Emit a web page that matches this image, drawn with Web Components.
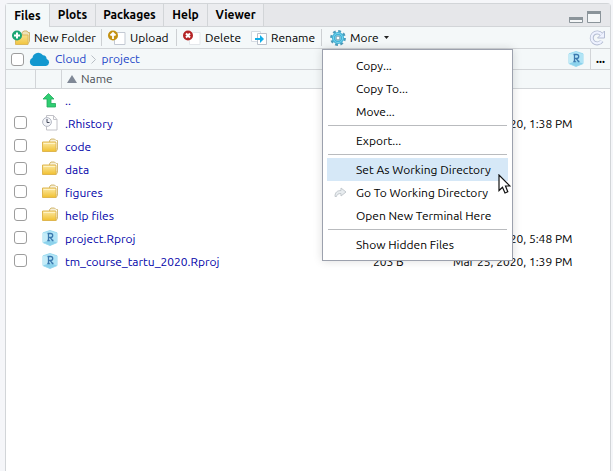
<!DOCTYPE html>
<html lang="en">
<head>
<meta charset="utf-8">
<title>Files</title>
<style>
html, body { height: 100%; }
body { margin: 0; background: #f5f6f9; color: #000; font: 12px/16px Ubuntu, "Noto Sans", "Open Sans", sans-serif; }
</style>
</head>
<body>
<files-pane></files-pane>
<script>
const RPROJ = `<svg width="16" height="16" viewBox="0 0 16 16"><path d="M8 .5 15 2.800v9.800L8 15.500 1 12.600V2.800z" fill="#b4e6f7" stroke="#9bdaef"/><path d="M1 2.800 8 5v10.500L1 12.600z" fill="#c4ecf8"/><path d="M8 5l7-2.200v9.800L8 15.500z" fill="#b0e4f6"/><path d="M1 12.600 8 10l7 2.600L8 15.500z" fill="#8cd2ec"/><path d="M5.500 3.500h3.200q2 0 2 2t-2 2H7M6.500 3.500v7M5.300 10.500h2.500M8.300 7.500l2.200 3h1" fill="none" stroke="#3a78ae" stroke-width="1.300"/></svg>`;
const FOLDER = `<svg width="16" height="16" viewBox="0 0 16 16"><defs><linearGradient id="g" x2="0" y2="1"><stop stop-color="#fbe9a6"/><stop offset="1" stop-color="#f1c02f"/></linearGradient></defs><path d="M7.500 4V2.500L9 1h3.500L14 2.500h1.500v9L14 13.500z" fill="#efe2b8" stroke="#d4bb78"/><path d="M9 4V3h5.500v7" fill="none" stroke="#fff"/><path d="M.5 4h13.200l.3 1v8.500H.5z" fill="url(#g)" stroke="#dfb64f"/><path d="M1.500 5.500h11.800" stroke="#fff3c4"/></svg>`;
const ICONS = {
  rproj: RPROJ,
  folder: FOLDER,
  newfolder: `<svg width="18" height="16" viewBox="0 0 18 16"><defs><linearGradient id="n" x2="0" y2="1"><stop stop-color="#f7e08f"/><stop offset="1" stop-color="#f2c53d"/></linearGradient></defs><path d="M10 4V2.500L12 1h3l1 1.500h1.500v9l-1.500 2z" fill="#efe2b8" stroke="#d0b56c"/><path d="M3.500 5H16v9.500H3.500z" fill="url(#n)" stroke="#dcb95c"/><circle cx="5" cy="5.500" r="5" fill="#18a573"/><path d="M5 2.500v6M2 5.500h6" stroke="#fff" stroke-width="2"/></svg>`,
  upload: `<svg width="18" height="16" viewBox="0 0 18 16"><path d="M6.500 2.500H17v12H6.500z" fill="#fff" stroke="#c3c9d3"/><circle cx="5" cy="5.500" r="5" fill="#c39111"/><path d="M5 9V4M2.500 5.500 5 3l2.500 2.500" fill="none" stroke="#fff" stroke-width="1.800"/></svg>`,
  remove: `<svg width="18" height="16" viewBox="0 0 18 16"><path d="M6.500 2.500H17v12H6.500z" fill="#fff" stroke="#e3e6ea"/><circle cx="5" cy="5.500" r="5" fill="#b42426"/><path d="M3 3.500l4 4M7 3.500l-4 4" stroke="#fff" stroke-width="2"/></svg>`,
  rename: `<svg width="16" height="16" viewBox="0 0 16 16"><path d="M.5 1.500h9v10h-9z" fill="#fff" stroke="#d5dbe3"/><path d="M6.500 3.500h9v11h-9z" fill="#fff" stroke="#b9c0cb"/><path d="M4 8h5V5l4 4-4 4v-3H4z" fill="#12aee8"/></svg>`,
  gear: `<svg width="16" height="16" viewBox="0 0 16 16"><circle cx="8" cy="8" r="6.700" fill="none" stroke="#4d9bba" stroke-width="2.400" stroke-dasharray="2.800 2.462"/><circle cx="8" cy="8" r="4.400" fill="#b7e2ef" stroke="#3fb4da" stroke-width="3.400"/><circle cx="8" cy="8" r="4.600" fill="none" stroke="#7dd3eb"/><circle cx="8" cy="8" r="2" fill="#fff" stroke="#6c9db0"/></svg>`,
  refresh: `<svg width="16" height="16" viewBox="0 0 16 16"><path d="M12.500 4.500A5.500 5.500 0 1 0 12.800 11" fill="none" stroke="#b4bcd2" stroke-width="4"/><path d="M15.500 1v7h-7z" fill="#eef2ff" stroke="#b4bcd2"/><path d="M12.500 4.500A5.500 5.500 0 1 0 12.600 11" fill="none" stroke="#eef2ff" stroke-width="2.200"/></svg>`,
  cloud: `<svg width="21" height="14" viewBox="0 0 21 14"><path d="M4.500 14a4.300 4.300 0 0 1-1-8.200A5.800 5.800 0 0 1 14 3.200a4 4 0 0 1 3.700 3.700A3.700 3.700 0 0 1 17 14z" fill="#1398cf"/></svg>`,
  up: `<svg width="16" height="16" viewBox="0 0 16 16"><path d="M6.500 1.500 12 7H9v4.500h4.500v3.500H5V7H1z" fill="#2fce72" stroke="#22a85c" stroke-width=".8"/></svg>`,
  history: `<svg width="16" height="16" viewBox="0 0 16 16"><path d="M4.500.5h7l3.500 4v10.500H4.500z" fill="#fff" stroke="#c2c2c8"/><path d="M11.500.5v4H15" fill="none" stroke="#c2c2c8"/><circle cx="5" cy="7" r="4.400" fill="#f3f4f8" stroke="#b5b9c4"/><path d="M5 4v3.500h2.500" fill="none" stroke="#444b5c"/></svg>`,
  goto: `<svg width="13" height="11" viewBox="0 0 13 11"><path d="M1 9.500C1 5.500 3 3.500 7 3.500V1l5 4-5 4V6.500C4 6.500 3 7.500 2.500 9.500z" fill="#e8ecef" stroke="#c3c9ce"/></svg>`,
  cursor: `<svg width="13" height="20" viewBox="0 0 13 20"><path d="M1 1v15.500l3.500-3.300L7 19l2.800-1.300L7.500 12H12z" fill="#fff" stroke="#111" stroke-width="1.200"/></svg>`,
  minimize: `<svg width="14" height="6" viewBox="0 0 14 6"><path d="M.5.5h13v5H.5z" fill="#f5f7f8" stroke="#8b949a"/><path d="M0 0h14v3H0z" fill="#8b949a"/></svg>`,
  maximize: `<svg width="14" height="12" viewBox="0 0 14 12"><path d="M.5.5h13v11H.5z" fill="#f5f7f8" stroke="#8b949a"/><path d="M0 0h14v3H0z" fill="#8b949a"/></svg>`,
  caret: `<svg width="5" height="3" viewBox="0 0 5 3"><path d="M0 0h5L2.500 3z" fill="#222"/></svg>`,
  chevron: `<svg width="5" height="9" viewBox="0 0 5 9"><path d="M.5.5l4 4-4 4" fill="none" stroke="#b9bfc5"/></svg>`,
  sort: `<svg width="10" height="8" viewBox="0 0 10 8"><path d="M5 0l5 8H0z" fill="#7f8896"/></svg>`
};
const RESET = `button { font: inherit; color: inherit; background: none; border: 0; margin: 0; padding: 0; text-align: left; white-space: nowrap; }
input[type=checkbox] { appearance: none; display: block; width: 13px; height: 13px; margin: 0; background: #fff; border: 1px solid #9d9d9d; border-radius: 3px; }
a { text-decoration: none; }`;
function define(name, css, html) {
  customElements.define(name, class extends HTMLElement {
    constructor() {
      super();
      this.attachShadow({ mode: "open" }).innerHTML = `<style>${RESET}${css}</style>` + (typeof html === "function" ? html(this) : html);
    }
  });
}

define("ui-icon", `:host { display: inline-flex; flex: none; } svg { display: block; }`, el => ICONS[el.getAttribute("name")]);

define("tab-strip", `
:host { display: flex; height: 22px; background: #e6e7ea; border-bottom: 1px solid #d2d5d8; }
[role=tablist] { display: grid; grid-template-columns: 44px 46px 68px 44px 56px; }
[role=tab] { font-weight: bold; text-align: center; border-right: 1px solid #d2d5d8; background: #ebecef; }
[role=tab][aria-selected=true] { background: #f4f8f9; margin-bottom: -1px; }
.window { margin-left: auto; display: flex; align-items: flex-end; gap: 4px; padding: 0 9px 3px 0; }
.window button { display: flex; }`,
`<div role="tablist">
<button role="tab" aria-selected="true">Files</button><button role="tab">Plots</button><button role="tab">Packages</button><button role="tab">Help</button><button role="tab">Viewer</button>
</div>
<div class="window"><button aria-label="Minimize"><ui-icon name="minimize"></ui-icon></button><button aria-label="Maximize"><ui-icon name="maximize"></ui-icon></button></div>`);

define("tool-button", `
:host { display: flex; }
button { display: flex; align-items: center; gap: 4px; }`,
el => `<button><ui-icon name="${el.getAttribute("icon")}"></ui-icon><slot></slot></button>`);

define("menu-item", `
:host { display: block; }
button { display: grid; grid-template-columns: 29px auto; align-items: center; width: 100%; height: 23px; padding: 0 15px 0 0; }
:host([active]) button { background: #d6e8f7; }
ui-icon { margin-left: 7px; }
span { grid-column: 2; grid-row: 1; }`,
el => `<button role="menuitem">${el.hasAttribute("icon") ? `<ui-icon name="${el.getAttribute("icon")}"></ui-icon>` : ""}<span><slot></slot></span></button>`);

define("more-menu", `
:host { display: block; box-sizing: border-box; width: 191px; padding: 4px; background: #fff; border: 1px solid #9ca1ad; box-shadow: 0 0 9px rgba(0,0,0,.14); }
hr { border: 0; height: 1px; background: #b9bbbe; margin: 2px 1px 3px; }
.cursor { position: absolute; left: 175px; top: 124px; pointer-events: none; }`,
`<div role="menu">
<menu-item>Copy...</menu-item><menu-item>Copy To...</menu-item><menu-item>Move...</menu-item><hr>
<menu-item>Export...</menu-item><hr>
<menu-item active>Set As Working Directory</menu-item><menu-item icon="goto">Go To Working Directory</menu-item><menu-item>Open New Terminal Here</menu-item><hr>
<menu-item>Show Hidden Files</menu-item>
</div><ui-icon class="cursor" name="cursor"></ui-icon>`);

define("tool-bar", `
:host { display: flex; height: 21px; padding: 0 5px 0 6px; background: #f4f8f9; border-bottom: 1px solid #d2d5d8; }
i { width: 1px; margin: 2px 0; background: #cdd0d3; }
.actions { display: grid; grid-template-columns: 89px 1px 74px 1px 74px 70px 1px auto; }
.actions > .inset { padding-left: 6px; }
.more { position: relative; display: flex; gap: 5px; align-items: center; padding-left: 8px; }
more-menu { position: absolute; z-index: 2; left: 0; top: 22px; }
.refresh { display: flex; margin-left: auto; align-self: center; }`,
`<div class="actions"><tool-button icon="newfolder">New Folder</tool-button><i></i><tool-button class="inset" icon="upload">Upload</tool-button><i></i><tool-button class="inset" icon="remove">Delete</tool-button><tool-button icon="rename">Rename</tool-button><i></i>
<div class="more"><tool-button icon="gear">More</tool-button><ui-icon name="caret"></ui-icon><more-menu></more-menu></div></div>
<button class="refresh" aria-label="Refresh"><ui-icon name="refresh"></ui-icon></button>`);

define("path-bar", `
:host { display: flex; align-items: center; height: 20px; padding-left: 5px; background: #f4f8f9; border-bottom: 1px solid #d2d5d8; }
ui-icon[name=cloud] { margin: 0 5px; }
nav { display: flex; align-items: center; gap: 5px; }
a { color: #1a45c8; }
.project { display: flex; margin-left: auto; padding-right: 6px; }
.browse { align-self: stretch; width: 20px; border-left: 1px solid #d2d5d8; text-align: center; font-weight: bold; }`,
`<input type="checkbox" aria-label="Select all"><ui-icon name="cloud"></ui-icon><nav><a href="#">Cloud</a><ui-icon name="chevron"></ui-icon><a href="#">project</a></nav>
<button class="project" aria-label="Project"><ui-icon name="rproj"></ui-icon></button><button class="browse">...</button>`);

const FILES = [
  ["up", "..", "", ""],
  ["history", ".Rhistory", "", "Mar 23, 2020, 1:38 PM"],
  ["folder", "code", "", ""],
  ["folder", "data", "", ""],
  ["folder", "figures", "", ""],
  ["folder", "help files", "", ""],
  ["rproj", "project.Rproj", "", "Mar 25, 2020, 5:48 PM"],
  ["rproj", "tm_course_tartu_2020.Rproj", "203 B", "Mar 25, 2020, 1:39 PM"]
];
define("file-table", `
:host { display: block; }
table { width: 100%; table-layout: fixed; border-collapse: separate; border-spacing: 0; }
col.check { width: 30px; } col.icon { width: 26px; } col.size { width: 80px; } col.date { width: 157px; }
th { height: 18px; padding: 0; background: #f4f8f9; border-bottom: 1px solid #d2d5d8; font-weight: normal; text-align: left; color: #4d5157; }
th:nth-child(-n+2) { border-right: 1px solid #d2d5d8; }
th button { display: flex; align-items: center; gap: 4px; padding-left: 5px; }
td { box-sizing: border-box; height: 23px; padding: 0; white-space: nowrap; }
td:nth-child(1) { padding: 0 0 2px 8px; }
td:nth-child(2) { padding: 0 0 2px 6px; }
td:nth-child(3) { padding-left: 3px; }
td ui-icon { display: flex; }
td a { color: #0000a8; }`,
`<table><colgroup><col class="check"><col class="icon"><col><col class="size"><col class="date"></colgroup>
<thead><tr><th></th><th></th><th><button><ui-icon name="sort"></ui-icon>Name</button></th><th></th><th></th></tr></thead>
<tbody>${FILES.map(([icon, name, size, date]) => `<tr><td>${icon === "up" ? "" : `<input type="checkbox" aria-label="Select ${name}">`}</td><td><ui-icon name="${icon}"></ui-icon></td><td><a href="#">${name}</a></td><td>${size}</td><td>${date}</td></tr>`).join("")}</tbody></table>`);

define("files-pane", `
:host { display: flex; box-sizing: border-box; min-height: 100vh; padding: 3px 2px 0 5px; }
section { flex: 1; min-width: 0; border: 1px solid #d2d5d8; border-bottom: 0; border-radius: 4px 4px 0 0; background: #fff; }`,
`<section><tab-strip></tab-strip><tool-bar></tool-bar><path-bar></path-bar><file-table></file-table></section>`);
</script>
</body>
</html>
